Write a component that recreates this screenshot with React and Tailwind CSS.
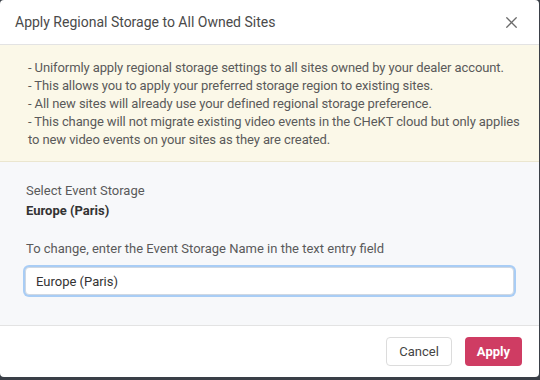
import React, { useState } from "react";
import { X } from "lucide-react";

const notes = [
  "- Uniformly apply regional storage settings to all sites owned by your dealer account.",
  "- This allows you to apply your preferred storage region to existing sites.",
  "- All new sites will already use your defined regional storage preference.",
  "- This change will not migrate existing video events in the CHeKT cloud but only applies to new video events on your sites as they are created.",
];

const App = () => {
  const [name, setName] = useState("Europe (Paris)");

  return (
    <div className="w-[540px] h-[380px] bg-[#3a3f47] font-['Roboto',sans-serif]">
      <div className="w-[539px] h-[377px] bg-white rounded-[4px] flex flex-col overflow-hidden">
        {/* Header */}
        <div className="h-[45px] flex items-center justify-between pl-[15px] pr-[18px] border-b border-[#e3e3e3] shrink-0">
          <h2 className="text-[14px] text-[#4a4a4a]">
            Apply Regional Storage to All Owned Sites
          </h2>
          <button type="button" className="text-[#6b6b6b]">
            <X size={19} strokeWidth={1.6} />
          </button>
        </div>

        {/* Notice */}
        <div className="bg-[#fbf8e8] border-b border-[#ebe6cf] pl-[28px] pr-[6px] pt-[14px] pb-[12px] text-[13px] leading-[17.9px] text-[#5a5a5a] tracking-[-0.1px] shrink-0">
          {notes.map((n) => (
            <p key={n}>{n}</p>
          ))}
        </div>

        {/* Body */}
        <div className="bg-[#f7f8fa] flex-1 px-[25px] pt-[19px] border-b border-[#e3e3e3]">
          <p className="text-[13px] text-[#5a5a5a] pl-[1px]">Select Event Storage</p>
          <p className="text-[13px] font-bold text-[#333] pl-[1px] mt-[1px]">
            Europe (Paris)
          </p>
          <p className="text-[13px] text-[#5a5a5a] pl-[1px] mt-[18px]">
            To change, enter the Event Storage Name in the text entry field
          </p>
          <input
            type="text"
            value={name}
            onChange={(e) => setName(e.target.value)}
            className="mt-[9px] w-[489px] h-[28px] px-[10px] bg-white text-[13px] text-[#333] rounded-[4px] border border-[#cfd8e3] outline-none ring-[2px] ring-[#a9cdf5]"
          />
        </div>

        {/* Footer */}
        <div className="h-[51px] flex items-center justify-end gap-[13px] pr-[17px] shrink-0">
          <button
            type="button"
            className="h-[29px] px-[12px] rounded-[4px] border border-[#dcdcdc] bg-white text-[13px] text-[#444]"
          >
            Cancel
          </button>
          <button
            type="button"
            className="h-[29px] px-[12px] rounded-[4px] bg-[#cf3c63] text-[13px] font-bold text-white"
          >
            Apply
          </button>
        </div>
      </div>
    </div>
  );
};

export default App;
